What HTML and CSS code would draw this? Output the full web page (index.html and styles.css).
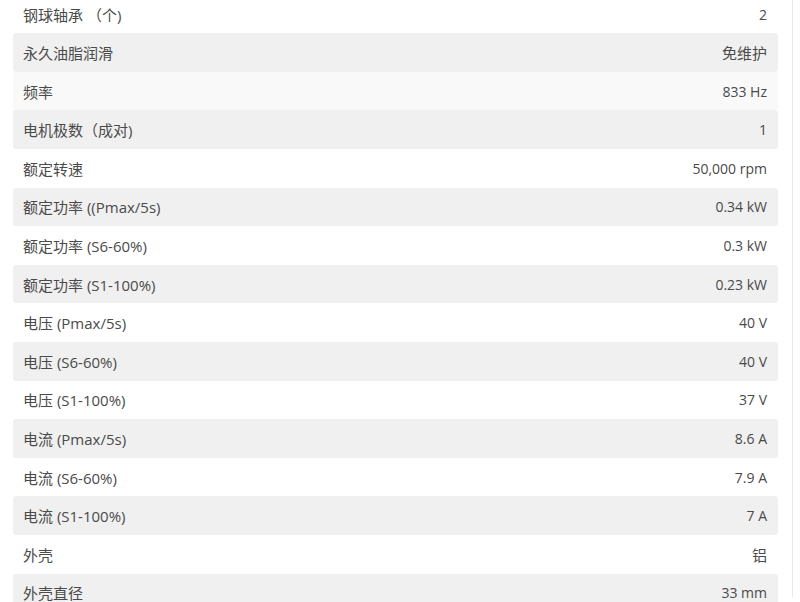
FILE: index.html
```html
<!DOCTYPE html>
<html lang="zh">
<head>
<meta charset="utf-8">
<link rel="stylesheet" href="styles.css">
</head>
<body>
<div class="page">
  <div class="specs">
    <div class="row"><span class="k">钢球轴承 （个)</span><span class="v">2</span></div>
    <div class="row alt"><span class="k">永久油脂润滑</span><span class="v zh">免维护</span></div>
    <div class="row hover"><span class="k">频率</span><span class="v">833 Hz</span></div>
    <div class="row alt"><span class="k">电机极数（成对)</span><span class="v">1</span></div>
    <div class="row"><span class="k">额定转速</span><span class="v">50,000 rpm</span></div>
    <div class="row alt"><span class="k">额定功率 ((Pmax/5s)</span><span class="v">0.34 kW</span></div>
    <div class="row"><span class="k">额定功率 (S6-60%)</span><span class="v">0.3 kW</span></div>
    <div class="row alt"><span class="k">额定功率 (S1-100%)</span><span class="v">0.23 kW</span></div>
    <div class="row"><span class="k">电压 (Pmax/5s)</span><span class="v">40 V</span></div>
    <div class="row alt"><span class="k">电压 (S6-60%)</span><span class="v">40 V</span></div>
    <div class="row"><span class="k">电压 (S1-100%)</span><span class="v">37 V</span></div>
    <div class="row alt"><span class="k">电流 (Pmax/5s)</span><span class="v">8.6 A</span></div>
    <div class="row"><span class="k">电流 (S6-60%)</span><span class="v">7.9 A</span></div>
    <div class="row alt"><span class="k">电流 (S1-100%)</span><span class="v">7 A</span></div>
    <div class="row"><span class="k">外壳</span><span class="v zh">铝</span></div>
    <div class="row alt"><span class="k">外壳直径</span><span class="v">33 mm</span></div>
  </div>
</div>
</body>
</html>
```

FILE: styles.css
```css
html, body {
  margin: 0;
  padding: 0;
  background: #ffffff;
  height: 100%;
  overflow: hidden;
}
body {
  font-family: "Open Sans", "Noto Sans CJK SC", sans-serif;
  font-size: 14px;
  color: #4a4a4a;
}
.page {
  width: 793px;
  height: 602px;
  border-right: 1px solid #e9e9e9;
  box-sizing: border-box;
  padding-left: 13px;
}
.specs {
  width: 765px;
  margin-top: -5.3px;
}
.row {
  display: flex;
  justify-content: space-between;
  align-items: center;
  height: 38.6px;
  padding: 0 11px 0 10px;
  border-radius: 3px;
  box-sizing: border-box;
}
.row.alt {
  background: #f0f0f0;
}
.row.hover {
  background: #f9f9f9;
}
.k, .v {
  white-space: nowrap;
}
.k {
  font-size: 15px;
}
.zh {
  font-family: "Noto Sans CJK SC", sans-serif;
  font-size: 15px;
}
```
